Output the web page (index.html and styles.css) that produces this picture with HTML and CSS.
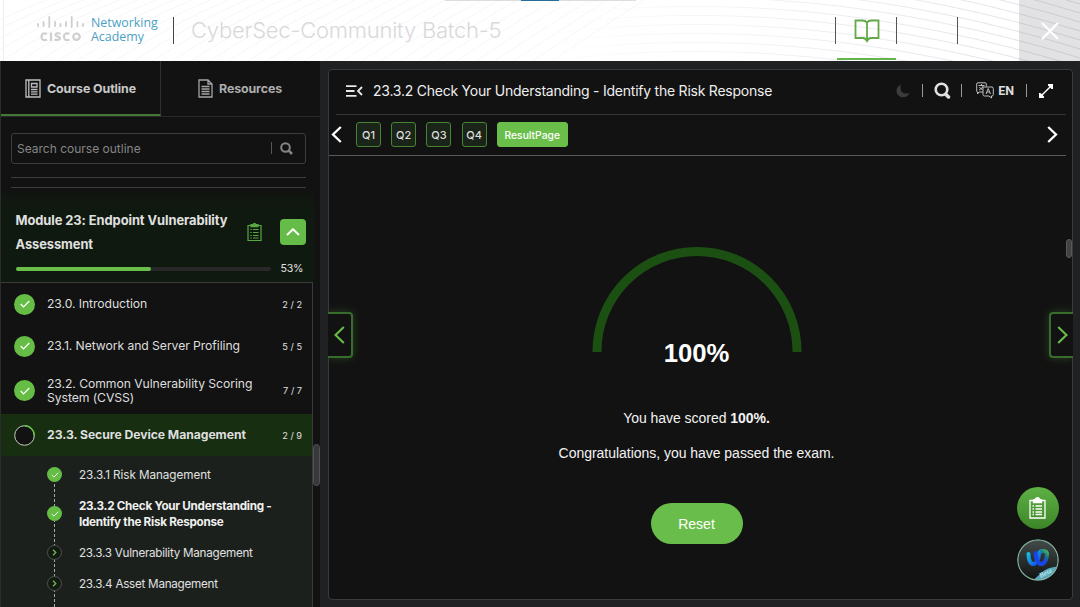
FILE: index.html
```html
<!DOCTYPE html>
<html lang="en">
<head>
<meta charset="utf-8">
<title>CyberSec-Community Batch-5</title>
<link rel="stylesheet" href="styles.css">
</head>
<body>
<header class="top">
  <svg class="waves" width="1080" height="61" viewBox="0 0 1080 61" fill="none"></svg>
  <div class="tabline"><span></span></div>
  <svg class="cisco" width="50" height="28" viewBox="0 0 50 28" fill="none" stroke="#cfcfcf" stroke-width="1.8" stroke-linecap="round">
    <path d="M2 8v2M7.6 6v4M13.3 1v10M19 6v4M24.4 8v2M30 6v4M35.700 1v10M41.400 6v4M47 8v2"/>
    <path stroke-width="2.200" stroke-linecap="butt" d="M11 17.800Q5.500 16 5.500 20.700T11 23.700M15 16.500v8.500M24.500 17.600Q19.500 16.500 19.500 18.900C19.500 21 24 20 24 22.500Q23.500 24.500 18.500 23.700M33.500 17.800Q28 16 28 20.700T33.500 23.700"/><circle cx="40.500" cy="20.700" r="3.200" stroke-width="2.200"/>
  </svg>
  <div class="academy"><span>Networking</span><span>Academy</span></div>
  <div class="brand-rule"></div>
  <div class="course">CyberSec-Community Batch-5</div>
  <nav class="topnav">
    <div class="navcell active"><svg width="26" height="24" viewBox="0 0 26 24" fill="none" stroke="#62a94a" stroke-width="1.800"><path d="M13 3.500Q11.500 1.500 8.500 1.500H1.500V19H9Q11.500 19 13 22Q14.500 19 17 19H24.500V1.500H17.500Q14.500 1.500 13 3.500ZM13 3.500V22"/></svg></div>
    <div class="navcell"></div>
    <div class="navcell"></div>
  </nav>
  <div class="close"><svg width="18" height="18" viewBox="0 0 18 18" stroke="#fff" stroke-width="2.200"><path d="M1 1L17 17M17 1L1 17"/></svg></div>
</header>

<div class="main">
  <aside class="side">
    <div class="tabs">
      <div class="tab on"><svg width="16" height="19" viewBox="0 0 16 19" fill="none" stroke="#bdbdbd" stroke-width="1.300"><path d="M1 1H15V18H1ZM3.800 1V18M6.500 4.500H12V8H6.500ZM6 10.500H12.500M6 12.800H12.500M6 15.100H12.500"/></svg><span class="t1">Course Outline</span></div>
      <div class="tab"><svg width="15" height="19" viewBox="0 0 15 19" fill="none" stroke="#a5a5a5" stroke-width="1.300"><path d="M1 1H10L14 5V18H1ZM10 1V5H14M3.500 7.500H11.500M3.500 10H11.500M3.500 12.500H11.500M3.500 15H11.500"/></svg><span class="t2">Resources</span></div>
    </div>
    <div class="search"><span class="ph">Search course outline</span><i></i><svg width="13" height="13" viewBox="0 0 13 13" fill="none" stroke="#858585" stroke-width="2"><circle cx="5.500" cy="5.500" r="4.300"/><path stroke-width="2.500" d="M8.700 8.700L12 12"/></svg></div>
    <div class="rules"></div>
    <section class="module">
      <div class="mhead">
        <h2>Module 23: Endpoint Vulnerability<br>Assessment</h2>
        <svg class="clip" width="15" height="20" viewBox="0 0 15 20" fill="none" stroke="#58a844" stroke-width="1.200"><path d="M1 3.500H14V18.500H1ZM6 7.500H11.500M6 10.500H11.500M6 13.500H11.500M6 16H11.500M3.300 7.500H4.700M3.300 10.500H4.700M3.300 13.500H4.700M3.300 16H4.700"/><path fill="#58a844" d="M4 2.500H6Q7.500 0 9 2.500H11V4.700H4Z"/></svg>
        <button class="collapse"><svg width="14" height="8" viewBox="0 0 14 8" fill="none" stroke="#fff" stroke-width="1.900"><path d="M1 7L7 1.200L13 7"/></svg></button>
      </div>
      <div class="progress"><div class="bar"><b style="width:53%"></b></div><span>53%</span></div>
    </section>
    <div class="list">
      <div class="row r0"><div class="ok"><svg width="10" height="8" viewBox="0 0 10 8" fill="none" stroke="#fff" stroke-width="1.200"><path d="M.7 4L3.500 6.800L9.300 1"/></svg></div><span class="lab">23.0. Introduction</span><em>2 / 2</em></div>
      <div class="row r1"><div class="ok"><svg width="10" height="8" viewBox="0 0 10 8" fill="none" stroke="#fff" stroke-width="1.200"><path d="M.7 4L3.500 6.800L9.300 1"/></svg></div><span class="lab">23.1. Network and Server Profiling</span><em>5 / 5</em></div>
      <div class="row r2"><div class="ok"><svg width="10" height="8" viewBox="0 0 10 8" fill="none" stroke="#fff" stroke-width="1.200"><path d="M.7 4L3.500 6.800L9.300 1"/></svg></div><span class="lab">23.2. Common Vulnerability Scoring<br>System (CVSS)</span><em>7 / 7</em></div>
      <div class="row r3"><svg class="ring" width="21" height="21" viewBox="0 0 21 21" fill="#121212"><circle cx="10.500" cy="10.500" r="9.800" stroke="#c5cec0"/><path d="M10.500 .8A9.700 9.700 0 0 1 20.200 11" fill="none" stroke="#68bd49" stroke-width="1.500"/></svg><span class="lab">23.3. Secure Device Management</span><em>2 / 9</em></div>
      <div class="sub">
        <div class="track"></div>
        <div class="s"><div class="ok"><svg width="8" height="6" viewBox="0 0 10 8" fill="none" stroke="#fff" stroke-width="1.200"><path d="M.7 4L3.500 6.800L9.300 1"/></svg></div><span>23.3.1 Risk Management</span></div>
        <div class="s cur"><div class="ok"><svg width="8" height="6" viewBox="0 0 10 8" fill="none" stroke="#fff" stroke-width="1.200"><path d="M.7 4L3.500 6.800L9.300 1"/></svg></div><span>23.3.2 Check Your Understanding -<br>Identify the Risk Response</span></div>
        <div class="s"><div class="todo"><svg width="5" height="7" viewBox="0 0 5 7" fill="none" stroke="#68bd49" stroke-width="1.300"><path d="M1 .7L3.800 3.500L1 6.300"/></svg></div><span>23.3.3 Vulnerability Management</span></div>
        <div class="s"><div class="todo"><svg width="5" height="7" viewBox="0 0 5 7" fill="none" stroke="#68bd49" stroke-width="1.300"><path d="M1 .7L3.800 3.500L1 6.300"/></svg></div><span>23.3.4 Asset Management</span></div>
      </div>
    </div>
    <div class="sidethumb"></div>
  </aside>

  <main class="panel">
    <div class="phead">
      <svg width="17" height="12" viewBox="0 0 17 12" fill="none" stroke="#e8e8e8" stroke-width="1.800"><path d="M0 1.200H10.500M0 6H8.500M0 10.800H10.500M16 2L12 6L16 10"/></svg>
      <h1>23.3.2 Check Your Understanding - Identify the Risk Response</h1>
      <svg class="moon" width="14" height="14" viewBox="0 0 14 14" fill="#3c3c3c"><path d="M5 .5C3 7 7 11 13.500 9C11 15 2 14.500 .7 8.500C0 5 1.500 2 5 .5Z"/></svg>
      <i class="sep"></i>
      <svg class="mag" width="17" height="17" viewBox="0 0 17 17" fill="none" stroke="#e0e0e0" stroke-width="2.600"><circle cx="7.500" cy="7.500" r="5.800"/><path stroke-width="3.500" stroke-linecap="round" d="M12 12.500L14.500 15"/></svg>
      <i class="sep s2"></i>
      <svg class="lang" width="18" height="17" viewBox="0 0 18 17" fill="none" stroke="#bebebe" stroke-width="1"><path d="M7 10H3L1.500 12V10Q.7 10 .7 9V2Q.7 .8 2 .8H9Q10.300 .8 10.300 2V4.500M8 5H16Q17.300 5 17.300 6.500V12.500Q17.300 14 16 14H15.500V16L13 14H8.500Q7 14 7 12.500V6Q7 5 8 5ZM2.500 3.500H8.500M5.500 2V3.500M3 8Q6.500 6.500 7.500 3.500M3.500 5Q4.500 7 6.500 7.500M10 12L12.200 6.500L14.500 12M10.800 10H13.700"/></svg>
      <b class="en">EN</b>
      <i class="sep"></i>
      <svg class="expand" width="16" height="16" viewBox="0 0 16 16" fill="#fff" stroke="#fff" stroke-width="1.400"><path d="M3 13L13 3"/><path stroke="none" d="M10 1H15V6L13.500 6L10 2.500ZM1 10V15H6V13.500L2.500 10Z"/></svg>
    </div>
    <div class="qbar">
      <svg width="11" height="17" viewBox="0 0 11 17" fill="none" stroke="#fff" stroke-width="2.300"><path d="M9.800 1L2 8.500L9.800 16"/></svg>
      <div class="qs"><button>Q1</button><button>Q2</button><button>Q3</button><button>Q4</button><button class="res">ResultPage</button></div>
      <svg width="11" height="17" viewBox="0 0 11 17" fill="none" stroke="#fff" stroke-width="2.300"><path d="M1.200 1L9 8.500L1.200 16"/></svg>
    </div>
    <div class="result">
      <svg class="arc" width="210" height="105" viewBox="0 0 210 105" fill="none" stroke="#1b5012" stroke-width="9"><path d="M5 105V104.500A100 100 0 0 1 205 104.500V105"/></svg>
      <strong class="pct">100%</strong>
      <p class="p1">You have scored <b>100%.</b></p>
      <p class="p2">Congratulations, you have passed the exam.</p>
      <button class="reset">Reset</button>
    </div>
    <button class="edge left"><svg width="11" height="18" viewBox="0 0 11 18" fill="none" stroke="#68bd49" stroke-width="2.100"><path d="M9.800 1L1.500 9L9.800 17"/></svg></button>
    <button class="edge right"><svg width="11" height="18" viewBox="0 0 11 18" fill="none" stroke="#68bd49" stroke-width="2.100"><path d="M1.200 1L9.500 9L1.200 17"/></svg></button>
    <div class="thumb"></div>
    <button class="fab notes"><svg width="17" height="22" viewBox="0 0 17 22" fill="none" stroke="#fff" stroke-width="1.300"><path d="M1 3.500H16V21H1ZM6.500 9H13M6.500 12H13M6.500 15H13M6.500 17.500H13M3.500 9H5M3.500 12H5M3.500 15H5M3.500 17.500H5"/><path fill="#fff" d="M4.500 3Q6.500 2.500 6.500 2Q8.500-.5 10.500 2Q10.500 2.500 12.500 3V5.500H4.500Z"/></svg></button>
    <svg class="fab bot" width="42" height="42" viewBox="0 0 42 42" fill="none">
      <defs>
        <linearGradient id="bg" x1="0" y1="0" x2="0" y2="1"><stop stop-color="#444b4a"/><stop offset="1" stop-color="#101211"/></linearGradient>
        <linearGradient id="wl" x1="10" y1="14" x2="22" y2="26" gradientUnits="userSpaceOnUse"><stop stop-color="#12c7e3"/><stop offset="1" stop-color="#1246df"/></linearGradient>
        <linearGradient id="wr" x1="31" y1="12" x2="20" y2="24" gradientUnits="userSpaceOnUse"><stop stop-color="#45b870"/><stop offset=".3" stop-color="#1b7d78"/><stop offset=".55" stop-color="#1746e8"/></linearGradient>
        <clipPath id="disc"><circle cx="21" cy="21" r="20"/></clipPath>
      </defs>
      <circle cx="21" cy="21" r="20.200" fill="url(#bg)"/>
      <path clip-path="url(#disc)" fill="#58a9bf" d="M42 27.500Q30 28 24 34Q20 38 15 42H42Z"/>
      <circle cx="21" cy="21" r="20.200" stroke="#81b29a" stroke-width="1.300"/>
      <path d="M11.500 15C11.500 21 13.500 25 16.500 25C19.500 25 21.500 20 22 15.500C22.300 13 23.500 12 25.500 12" stroke="url(#wl)" stroke-width="4" stroke-linecap="round"/>
      <path d="M18.500 14C19 20 21 25 24.500 25C28 25 30 19 30 14.500C29.500 12.300 28 12 25.500 12" stroke="url(#wr)" stroke-width="4" stroke-linecap="round"/>
      <text x="23.500" y="39" transform="rotate(-27 23.500 39)" class="beta">Beta</text>
    </svg>
  </main>
</div>
<script src="waves.js"></script>
</body>
</html>
```
FILE: styles.css
```css
* { box-sizing: border-box; }
body { margin: 0; width: 1080px; height: 607px; overflow: hidden; background: #1f2123; color: #e0e0e0; font-family: Inter, "Liberation Sans", sans-serif; display: flex; flex-direction: column; }
button { border: 0; padding: 0; margin: 0; font-family: inherit; color: #fff; display: flex; align-items: center; justify-content: center; }
svg { flex: none; display: block; }
span { white-space: nowrap; }

.top { position: relative; height: 61px; flex: none; background: #fff; display: flex; align-items: center; padding-left: 36px; }
.waves { position: absolute; left: 0; top: 0; }
.tabline { position: absolute; left: 445px; top: 0; width: 191px; height: 1px; background: #ddd; }
.tabline span { display: block; width: 38px; height: 1px; margin-left: 76px; background: #286c98; }
.cisco { position: relative; margin-bottom: 1px; }
.academy { position: relative; display: flex; flex-direction: column; margin: 0 0 1px 5px; width: 82px; font: 12.4px/14px "Open Sans", sans-serif; color: #4d9fc4; }
.brand-rule { position: relative; width: 1px; height: 27px; background: #444; }
.course { position: relative; margin: 0 0 2px 17px; font-size: 22px; font-weight: 300; letter-spacing: -.22px; color: #d9d9db; white-space: nowrap; }
.topnav { position: relative; display: flex; margin-left: auto; margin-right: 1px; height: 61px; align-items: center; }
.navcell { width: 61px; height: 61px; display: flex; justify-content: center; align-items: center; background: linear-gradient(#555, #555) 0 17px / 1px 27px no-repeat; }
.navcell svg { margin-left: 2px; }
.navcell.active { background: linear-gradient(#555, #555) 0 17px / 1px 27px no-repeat, linear-gradient(#65b54d, #65b54d) 2px 58px / 59px 2px no-repeat; }
.close { position: relative; width: 61px; height: 61px; background: rgba(125, 125, 130, .22); display: flex; align-items: center; justify-content: center; }

.main { display: flex; height: 546px; padding-right: 7px; }
.side { position: relative; width: 320px; height: 546px; margin-right: 8px; background: #121212; border-left: 1px solid #2c2c2c; display: flex; flex-direction: column; overflow: hidden; flex: none; }
.tabs { display: flex; height: 56px; border-bottom: 1px solid #292929; }
.tab { display: flex; align-items: center; padding-left: 37px; flex: 1; gap: 6px; font-size: 12.4px; letter-spacing: -.1px; font-weight: 700; color: #adadad; }
.tab.on { flex: 0 0 160px; padding: 2px 0 0 24px; gap: 6px; color: #c9c9c9; border-right: 1px solid #2f2f2f; border-bottom: 2px solid #447735; }
.search { margin: 16px 0 0 10px; width: 295px; height: 31px; border: 1px solid #3d3d3d; border-radius: 3px; display: flex; align-items: center; padding: 0 12px 0 5px; font-size: 12px; color: #858585; }
.search i { width: 1px; height: 12px; background: #555; margin: 0 8px 0 auto; }
.rules { margin: 13px 14px 0 10px; height: 12px; border: solid #3d3d3d; border-width: 1px 0; }
.module { height: 93px; margin: 1px 6px 0 0; padding: 19px 8px 0 14.5px; background: linear-gradient(#121212, #10190f 16px); }
.mhead { display: flex; align-items: center; }
h2 { margin: 0; padding-top: 1px; font-size: 12.9px; letter-spacing: -.07px; line-height: 24px; font-weight: 700; width: 231px; height: 48px; white-space: nowrap; }
.collapse { margin-left: auto; width: 26px; height: 26px; border-radius: 4px; background: #66bc48; }
.progress { display: flex; align-items: center; justify-content: space-between; font-size: 10.6px; letter-spacing: -.3px; padding-right: 3px; height: 25px; }
.bar { width: 255px; height: 4px; background: #282828; border-radius: 3px; }
.bar b { display: block; height: 4px; border-radius: 3px; background: #6abf4b; }
.list { width: 312px; height: 325px; border: solid #3a3a3a; border-width: 1px 1px 0 0; flex: none; }
.row { display: flex; align-items: center; padding: 0 10px 0 13px; }
.ok { width: 21px; height: 21px; border-radius: 50%; background: #66bd46; display: flex; align-items: center; justify-content: center; }
.lab { margin-left: 12px; font-size: 12.2px; letter-spacing: -.07px; line-height: 13.5px; color: #dedede; }
.row em { margin-left: auto; font-style: normal; font-size: 9.2px; }
.r0 { height: 42px; }
.r1 { height: 42px; }
.r2 { height: 47px; }
.r3 { height: 42px; background: #172e11; }
.r3 .lab { font-weight: 700; letter-spacing: -.05px; }
.sub { position: relative; height: 151px; background: #1c201c; padding-top: 10px; }
.track { position: absolute; left: 53px; top: 18px; bottom: 0; border-left: 1px dashed #aaa; }
.s { position: relative; display: flex; align-items: center; height: 17px; margin-bottom: 14px; padding-left: 46px; font-size: 11.7px; letter-spacing: -.27px; line-height: 16.500px; }
.s > span { margin-left: 17px; padding-top: 1px; }
.s:nth-child(2) > span { letter-spacing: -.06px; }
.s .ok, .todo { width: 15px; height: 15px; }
.todo { border: 1px solid #4a564a; border-radius: 50%; background: #151915; display: flex; align-items: center; justify-content: center; }
.cur { height: 33px; font-weight: 700; color: #f0f0f0; }
.sidethumb { position: absolute; left: 312px; top: 383px; width: 7px; height: 42px; border: 1px solid #525252; background: #37383a; border-radius: 4px; }

.panel { position: relative; width: 745px; height: 531px; margin-top: 8px; background: #121212; border: 1px solid #3a3b3d; border-radius: 4px; display: flex; flex-direction: column; }
.phead { display: flex; align-items: center; height: 45px; margin: 0 6px 0 7px; padding: 0 12px 3px 10px; border-bottom: 1px solid #353535; }
h1 { margin: 0 0 0 10px; font-size: 14px; letter-spacing: -.235px; font-weight: 400; white-space: nowrap; color: #eee; }
.moon { margin-left: auto; }
.sep { width: 1px; height: 13px; background: #999; margin: 0 11px 0 12px; }
.s2 { margin-left: 10px; }
.en { font: 700 12.5px Roboto, sans-serif; margin-left: 4px; color: #ddd; }
.lang { margin-left: 3px; }
.qbar { display: flex; align-items: center; height: 41px; padding: 0 15px 1px 2px; margin-right: 6px; border-bottom: 1px solid #5a5a5a; }
.qs { display: flex; flex: 1; gap: 10.2px; margin-left: 14px; }
.qs button { width: 25px; height: 25px; border: 1px solid #478535; border-radius: 3px; background: #1a2418; font-size: 11px; font-weight: 500; color: #ddd; }
.qs .res { width: 71px; background: #6abf4b; border-color: #6abf4b; color: #fff; font-size: 10.3px; }
.qbar > svg:last-child { margin-right: -7px; }
.result { display: flex; flex-direction: column; align-items: center; padding: 91px 8px 0 0; font-family: "Liberation Sans", Arial, sans-serif; color: #f2f2f2; }
.pct { font-size: 25.7px; line-height: 30px; margin-top: -14px; color: #fff; }
.result p { margin: 0; font-size: 14px; line-height: 18px; letter-spacing: -.03px; white-space: nowrap; }
.result .p1 { margin-top: 41px; }
.result .p2 { margin-top: 17px; }
.reset { width: 92px; height: 41px; margin-top: 41px; border-radius: 21px; background: #69be4b; font-size: 14px; }
.edge { position: absolute; top: 242px; width: 25px; height: 46px; background: #121212; border: 2px solid #376c2c; box-shadow: 0 0 8px #294021; }
.edge.left { left: -1px; border-left: 0; border-radius: 0 4px 4px 0; clip-path: inset(-12px -12px -12px 0); }
.edge.right { right: -1px; width: 24px; border-right: 0; border-radius: 4px 0 0 4px; clip-path: inset(-12px 0 -12px -12px); }
.thumb { position: absolute; right: 0; top: 169px; width: 6px; height: 19px; border-radius: 3px; background: #414244; border: 1px solid #58595b; }
.fab { position: absolute; left: 688px; width: 42px; height: 42px; border-radius: 50%; }
.notes { top: 417px; background: linear-gradient(#5eb045, #3c8527); }
.notes svg { margin-right: 1px; }
.bot { top: 469px; }
.beta { font: italic 700 7px "Liberation Serif", serif; fill: #b9e3e5; }
```
FILE: waves.js
```js
const svg = document.querySelector('.waves');
function line(d, color) {
  const p = document.createElementNS('http://www.w3.org/2000/svg', 'path');
  p.setAttribute('d', d);
  p.setAttribute('stroke', color);
  svg.appendChild(p);
}
svg.insertAdjacentHTML('afterbegin', '<defs><linearGradient id="fade" gradientUnits="userSpaceOnUse" x1="540" y1="0" x2="1080" y2="0"><stop stop-color="#fff"/><stop offset=".35" stop-color="#f4f4f6"/><stop offset="1" stop-color="#e0e0e4"/></linearGradient></defs>');
for (let i = 0; i < 34; i++) {
  const x = -80 + i * 19;
  line(`M${x} 64Q${x + 60} 24 ${x + 135 - i} -3`, '#f8f6f7');
}
for (let i = 0; i < 19; i++) {
  const y = -95 + i * 9;
  line(`M540 ${y + 22}Q800 ${y - 14} 1080 ${y + 72}`, 'url(#fade)');
}
line('M3.500 0v61', '#eeeeee');
```
